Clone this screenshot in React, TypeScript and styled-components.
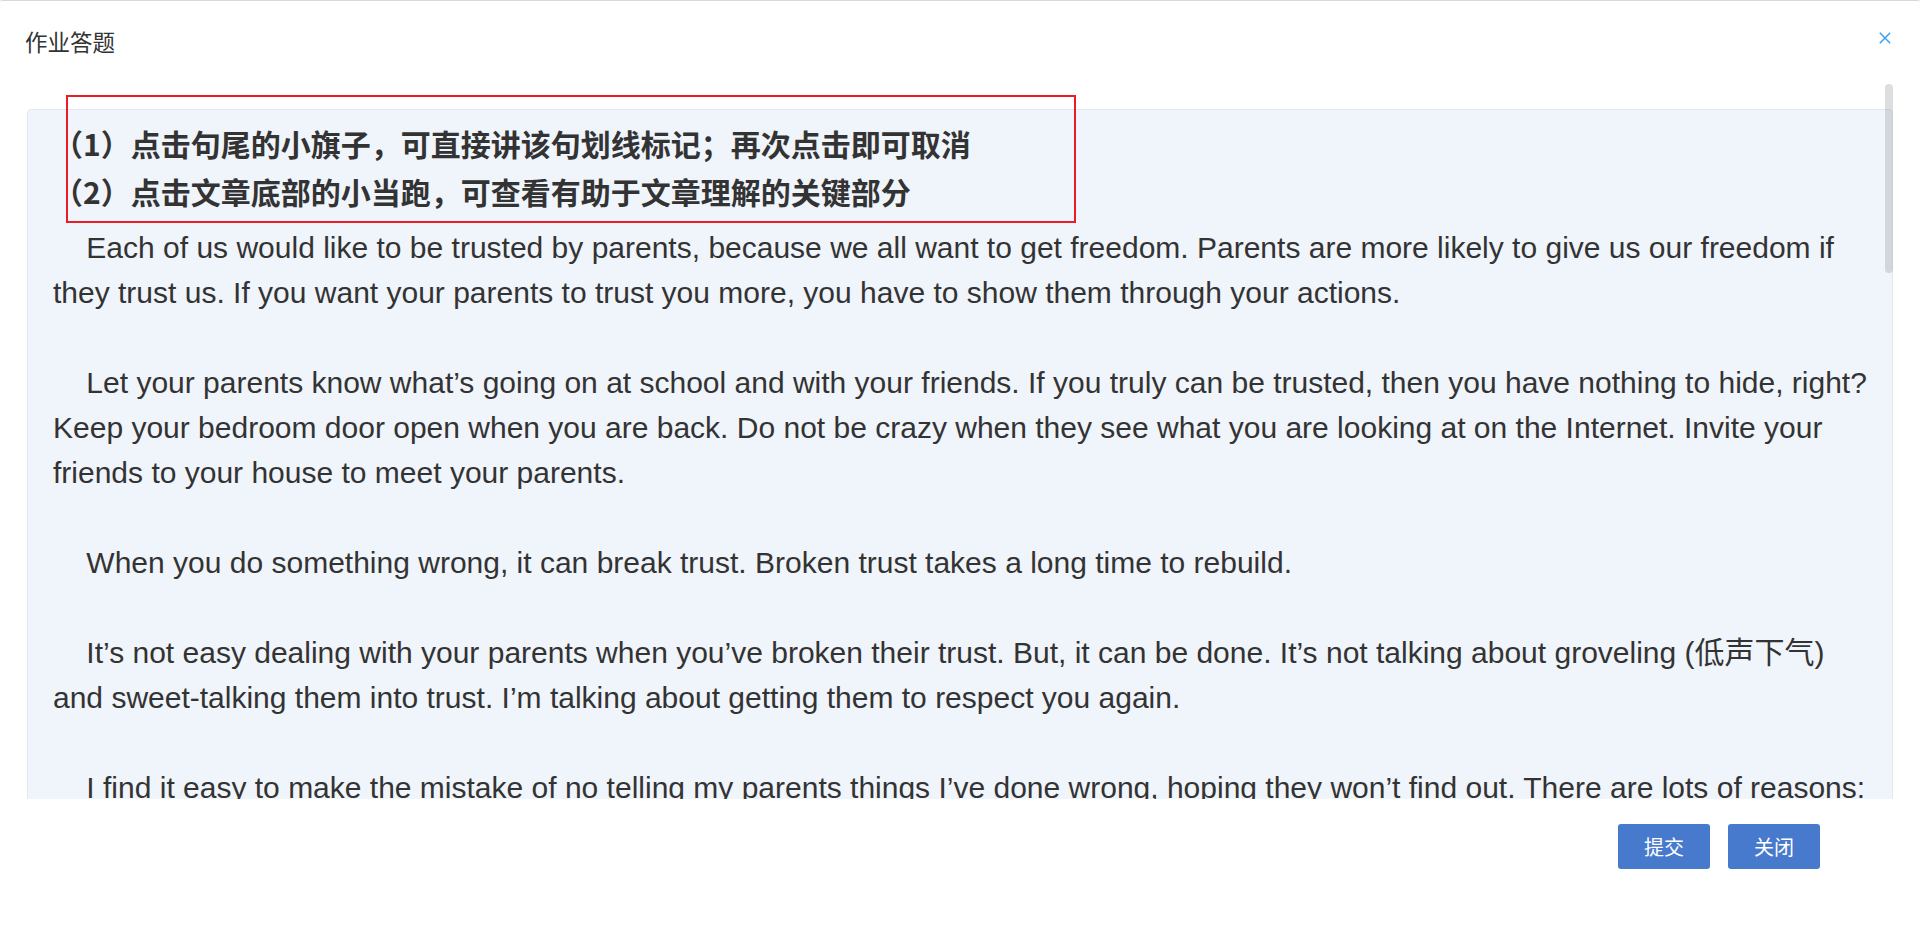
import React from "react";
import styled, { createGlobalStyle } from "styled-components";

const GlobalStyle = createGlobalStyle`
  html, body {
    margin: 0;
    padding: 0;
    background: #ffffff;
    overflow: hidden;
  }
  * { box-sizing: border-box; }
`;

const Dialog = styled.div`
  width: 1920px;
  height: 942px;
  display: flex;
  flex-direction: column;
  background: #ffffff;
  border-top: 1px solid #d9d9d9;
  border-radius: 2px;
  font-family: "Noto Sans CJK SC", "Liberation Sans", sans-serif;
`;

const Header = styled.div`
  height: 83px;
  flex: 0 0 auto;
  display: flex;
  align-items: flex-start;
  justify-content: space-between;
  padding: 28px 29px 0 25px;
`;

const Title = styled.div`
  font-size: 22.5px;
  line-height: 24px;
  color: #333333;
  font-weight: 400;
`;

const CloseButton = styled.button`
  width: 12px;
  height: 12px;
  margin-top: 3px;
  padding: 0;
  border: 0;
  background: transparent;
  display: flex;
  cursor: pointer;
`;

const ScrollArea = styled.div`
  position: relative;
  height: 715px;
  flex: 0 0 auto;
  overflow: hidden;
  padding: 0 27px;
`;

const Panel = styled.div`
  margin-top: 25px;
  background: #f0f4fb;
  border: 1px solid #e3e7ef;
  border-radius: 4px;
  padding: 9px 21px 40px 25px;
`;

const Heading = styled.div`
  font-family: "Noto Sans CJK SC", sans-serif;
  font-size: 30px;
  font-weight: 700;
  line-height: 48px;
  color: #333333;
  margin-bottom: 10px;
`;

const Paragraph = styled.p`
  margin: 0 0 45px;
  font-family: "Liberation Sans", "Noto Sans CJK SC", sans-serif;
  font-size: 30px;
  line-height: 45px;
  color: #333333;
  text-indent: 33.36px;
`;

const Annotation = styled.div`
  position: absolute;
  left: 66px;
  top: 11px;
  width: 1010px;
  height: 128px;
  border: 2px solid #e81d25;
  pointer-events: none;
`;

const ScrollThumb = styled.div`
  position: absolute;
  top: 0;
  right: 27px;
  width: 8px;
  height: 189px;
  border-radius: 4px;
  background: rgba(144, 147, 153, 0.3);
`;

const Footer = styled.div`
  flex: 0 0 auto;
  display: flex;
  justify-content: flex-end;
  gap: 18px;
  padding: 25px 100px 0 0;
`;

const Button = styled.button`
  min-width: 92px;
  height: 45px;
  padding: 0 12px;
  border: 0;
  border-radius: 3px;
  background: #477acc;
  color: #ffffff;
  font-family: "Noto Sans CJK SC", sans-serif;
  font-size: 20px;
  font-weight: 400;
  line-height: 45px;
  cursor: pointer;
`;

const paragraphs = [
  "Each of us would like to be trusted by parents, because we all want to get freedom. Parents are more likely to give us our freedom if they trust us. If you want your parents to trust you more, you have to show them through your actions.",
  "Let your parents know what\u2019s going on at school and with your friends. If you truly can be trusted, then you have nothing to hide, right? Keep your bedroom door open when you are back. Do not be crazy when they see what you are looking at on the Internet. Invite your friends to your house to meet your parents.",
  "When you do something wrong, it can break trust. Broken trust takes a long time to rebuild.",
  "It\u2019s not easy dealing with your parents when you\u2019ve broken their trust. But, it can be done. It\u2019s not talking about groveling (低声下气) and sweet-talking them into trust. I\u2019m talking about getting them to respect you again.",
  "I find it easy to make the mistake of no telling my parents things I\u2019ve done wrong, hoping they won\u2019t find out. There are lots of reasons: I don\u2019t want them to be angry with me, I don\u2019t want to be punished, and I don\u2019t want to let them down. But when they find out from somebody else, it only makes things worse.",
  "So tell them the truth, even when it is hard. Say sorry for what you have done, and tell them what you will do to make it right. Then keep your promise.",
  "Trust is built little by little. Do what you say you will do, come home on time, and be honest about where you are going. Over time, your parents will see that you are growing up, and they will give you the freedom you want.",
];

export default function App() {
  return (
    <>
      <GlobalStyle />
      <Dialog>
        <Header>
          <Title>作业答题</Title>
          <CloseButton aria-label="关闭">
            <svg width="12" height="12" viewBox="0 0 12 12">
              <path d="M0.8 0.8 L11.2 11.2 M11.2 0.8 L0.8 11.2" stroke="#3d9ff0" strokeWidth="1.5" fill="none" />
            </svg>
          </CloseButton>
        </Header>
        <ScrollArea>
          <Panel>
            <Heading>
              （1）点击句尾的小旗子，可直接讲该句划线标记；再次点击即可取消
              <br />
              （2）点击文章底部的小当跑，可查看有助于文章理解的关键部分
            </Heading>
            {paragraphs.map((p, i) => (
              <Paragraph key={i}>{p}</Paragraph>
            ))}
          </Panel>
          <Annotation />
          <ScrollThumb />
        </ScrollArea>
        <Footer>
          <Button>提交</Button>
          <Button>关闭</Button>
        </Footer>
      </Dialog>
    </>
  );
}
